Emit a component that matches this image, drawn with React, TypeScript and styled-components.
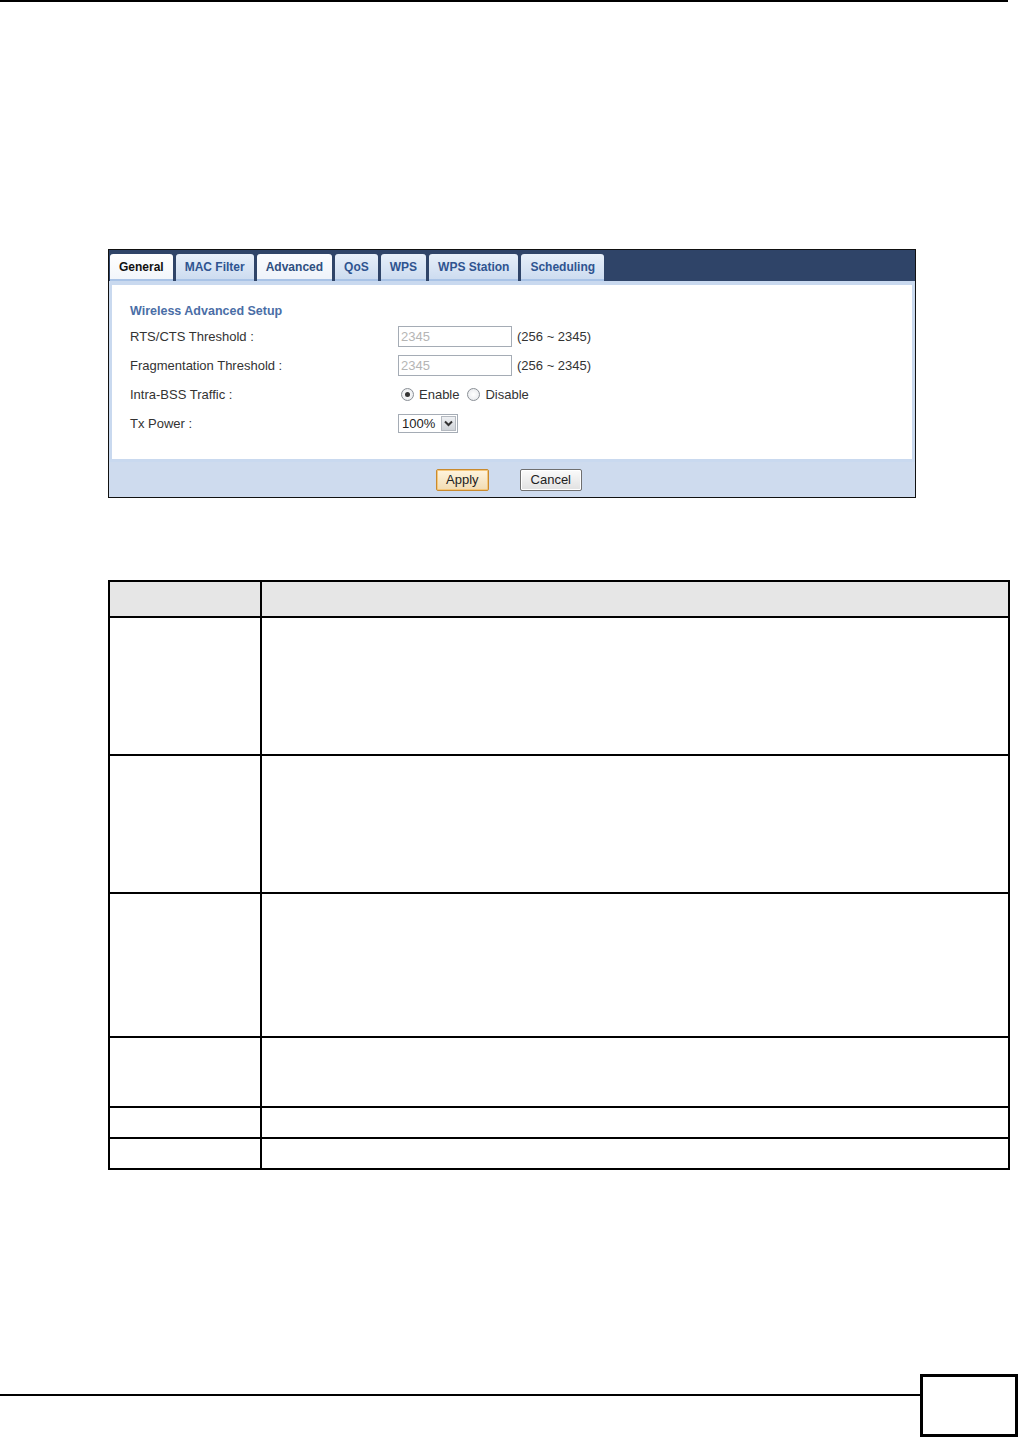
import styled, { createGlobalStyle } from "styled-components";

const GlobalStyle = createGlobalStyle`
  body {
    margin: 0;
    background: #ffffff;
    font-family: "Liberation Sans", Arial, sans-serif;
  }
`;

const Page = styled.div`
  width: 1020px;
  min-height: 1438px;
  display: flex;
  flex-direction: column;
  box-sizing: border-box;
`;

const TopRule = styled.div`
  width: 1008px;
  height: 0;
  border-top: 2px solid #000;
`;

const Frame = styled.div`
  margin: 247px 0 0 108px;
  width: 808px;
  height: 249px;
  box-sizing: border-box;
  border: 1px solid #111;
  display: flex;
  flex-direction: column;
  font-family: "Liberation Sans", Arial, sans-serif;
  font-size: 13px;
  color: #333;
`;

const TabBar = styled.div`
  height: 31px;
  background: #2f4468;
  display: flex;
  align-items: flex-end;
  gap: 3px;
  padding-left: 1px;
`;

const Tab = styled.div<{ $variant?: "active" | "light" }>`
  height: 27px;
  padding: 0 9px;
  display: flex;
  align-items: center;
  box-sizing: border-box;
  border-radius: 3px 3px 0 0;
  font-weight: bold;
  font-size: 12px;
  border-bottom: 2px solid #a9c3e6;
  color: ${(p) =>
    p.$variant === "active" ? "#111" : p.$variant === "light" ? "#2f4f80" : "#2f5490"};
  background: ${(p) =>
    p.$variant === "active"
      ? "linear-gradient(#ffffff, #f2f6fb)"
      : p.$variant === "light"
      ? "linear-gradient(#fbfcfe, #eef3fa)"
      : "linear-gradient(#e7eff9, #cddcf0)"};
`;

const Content = styled.div`
  flex: 1;
  background: #ffffff;
  border: 3px solid #c9d9ef;
  border-top-width: 4px;
  padding: 19px 0 0 18px;
  display: flex;
  flex-direction: column;
`;

const SectionTitle = styled.div`
  color: #4a6ea6;
  font-weight: bold;
  font-size: 12.5px;
  margin-bottom: 4px;
`;

const FieldRow = styled.div`
  height: 29px;
  display: grid;
  grid-template-columns: 268px auto;
  align-items: center;
`;

const Label = styled.div`
  color: #333;
`;

const Control = styled.div`
  display: flex;
  align-items: center;
  gap: 5px;
`;

const TextBox = styled.div`
  width: 114px;
  height: 21px;
  border: 1px solid #a5acb5;
  box-sizing: border-box;
  color: #b5b5b5;
  padding-left: 2px;
  display: flex;
  align-items: center;
`;

const Radio = styled.span<{ $checked?: boolean }>`
  width: 11px;
  height: 11px;
  border-radius: 50%;
  border: 1px solid #8a8f96;
  background: radial-gradient(#fff, #e4e6ea);
  display: inline-flex;
  align-items: center;
  justify-content: center;
  margin-left: 3px;
  &::after {
    content: "";
    width: 5px;
    height: 5px;
    border-radius: 50%;
    background: ${(p) => (p.$checked ? "#333" : "transparent")};
  }
`;

const Select = styled.div`
  width: 60px;
  height: 19px;
  border: 1px solid #a5acb5;
  box-sizing: border-box;
  display: flex;
  align-items: center;
  justify-content: space-between;
  padding-left: 3px;
  color: #222;
`;

const SelectArrow = styled.span`
  width: 15px;
  height: 15px;
  margin-right: 1px;
  background: linear-gradient(#eef0f3, #cfd3d8);
  border: 1px solid #b4b9c0;
  box-sizing: border-box;
  display: flex;
  align-items: center;
  justify-content: center;
`;

const Footer = styled.div`
  height: 35px;
  background: #cedbee;
  display: flex;
  align-items: center;
  justify-content: center;
  gap: 31px;
  padding-right: 6px;
`;

const Button = styled.div<{ $primary?: boolean }>`
  height: 22px;
  padding: 0 ${(p) => (p.$primary ? 9 : 10)}px;
  min-width: 52px;
  box-sizing: border-box;
  border: 1px solid ${(p) => (p.$primary ? "#c98a2e" : "#6f6f6f")};
  box-shadow: inset 0 0 0 1px ${(p) => (p.$primary ? "#f5c77a" : "#ffffff")};
  background: ${(p) =>
    p.$primary ? "linear-gradient(#fff4de, #f1dcb3)" : "linear-gradient(#fbfbfb, #e1e1e1)"};
  display: flex;
  align-items: center;
  justify-content: center;
  font-size: 13px;
  color: #222;
  border-radius: 2px;
`;

const Table = styled.table`
  margin: 82px 0 0 108px;
  width: 902px;
  border-collapse: collapse;
  border: 2px solid #000;
`;

const Cell = styled.td<{ $head?: boolean; $h: number }>`
  border: 2px solid #000;
  height: ${(p) => p.$h}px;
  padding: 0;
  box-sizing: border-box;
  background: ${(p) => (p.$head ? "#e6e6e6" : "#ffffff")};
  &:first-child {
    width: 152px;
  }
`;

const PageFooter = styled.div`
  margin-top: auto;
  display: flex;
  align-items: flex-start;
  height: 64px;
`;

const FooterRule = styled.div`
  width: 920px;
  margin-top: 20px;
  border-top: 2px solid #000;
`;

const PageBox = styled.div`
  width: 98px;
  height: 63px;
  border: 3px solid #000;
  box-sizing: border-box;
`;

const tabs: { name: string; variant?: "active" | "light" }[] = [
  { name: "General", variant: "active" },
  { name: "MAC Filter" },
  { name: "Advanced", variant: "light" },
  { name: "QoS" },
  { name: "WPS" },
  { name: "WPS Station" },
  { name: "Scheduling" },
];

const rowHeights = [36, 138, 138, 144, 70, 31, 31];

export default function App() {
  return (
    <Page>
      <GlobalStyle />
      <TopRule />
      <Frame>
        <TabBar>
          {tabs.map((t) => (
            <Tab key={t.name} $variant={t.variant}>
              {t.name}
            </Tab>
          ))}
        </TabBar>
        <Content>
          <SectionTitle>Wireless Advanced Setup</SectionTitle>
          <FieldRow>
            <Label>RTS/CTS Threshold :</Label>
            <Control>
              <TextBox>2345</TextBox>
              <span>(256 ~ 2345)</span>
            </Control>
          </FieldRow>
          <FieldRow>
            <Label>Fragmentation Threshold :</Label>
            <Control>
              <TextBox>2345</TextBox>
              <span>(256 ~ 2345)</span>
            </Control>
          </FieldRow>
          <FieldRow>
            <Label>Intra-BSS Traffic :</Label>
            <Control>
              <Radio $checked />
              <span>Enable</span>
              <Radio />
              <span>Disable</span>
            </Control>
          </FieldRow>
          <FieldRow>
            <Label>Tx Power :</Label>
            <Control>
              <Select>
                100%
                <SelectArrow>
                  <svg width="9" height="7" viewBox="0 0 9 7">
                    <path d="M1 1.5 L4.5 5 L8 1.5" fill="none" stroke="#333" strokeWidth="2" />
                  </svg>
                </SelectArrow>
              </Select>
            </Control>
          </FieldRow>
        </Content>
        <Footer>
          <Button $primary>Apply</Button>
          <Button>Cancel</Button>
        </Footer>
      </Frame>
      <Table>
        <tbody>
          {rowHeights.map((h, i) => (
            <tr key={i}>
              <Cell $head={i === 0} $h={h} />
              <Cell $head={i === 0} $h={h} />
            </tr>
          ))}
        </tbody>
      </Table>
      <PageFooter>
        <FooterRule />
        <PageBox />
      </PageFooter>
    </Page>
  );
}
